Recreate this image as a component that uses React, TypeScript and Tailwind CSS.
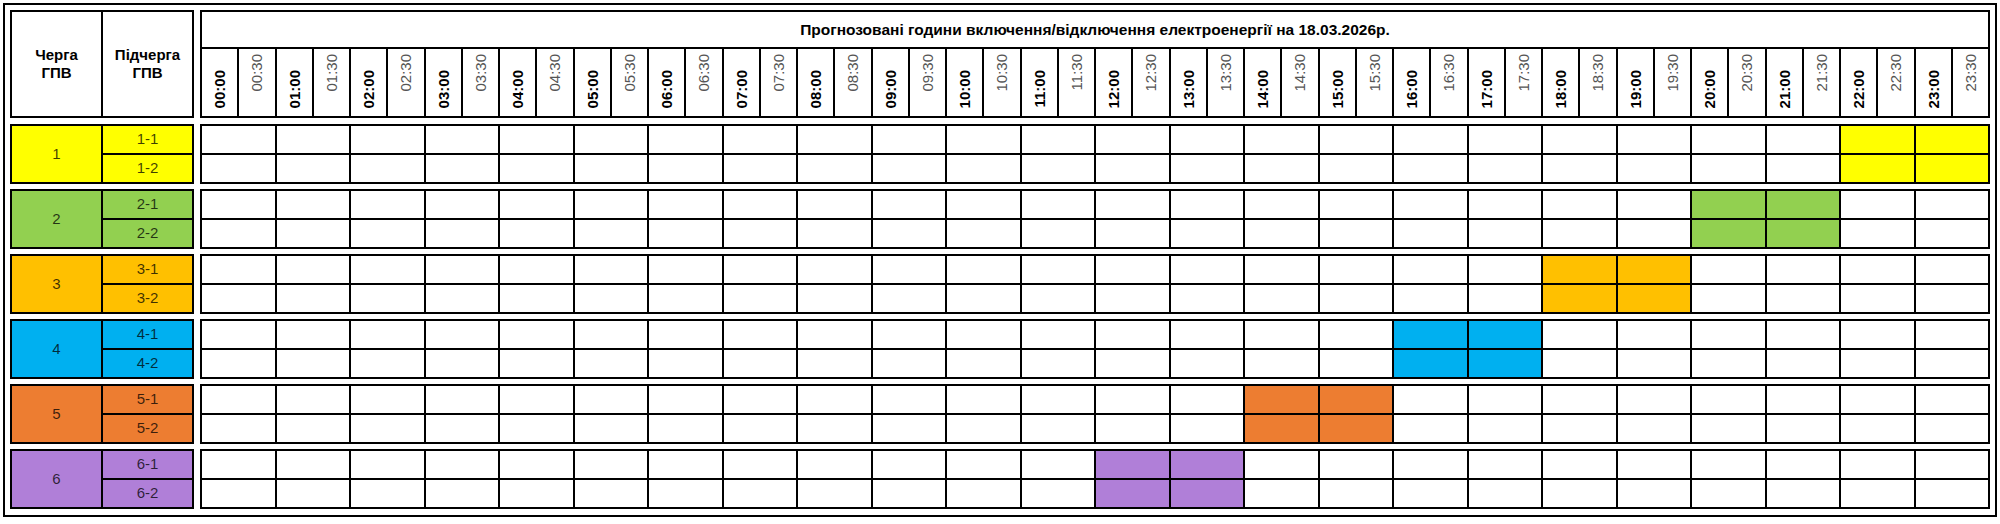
const groups = [
  { n: 1, color: "bg-[#ffff00]", from: 22 },
  { n: 2, color: "bg-[#92d050]", from: 20 },
  { n: 3, color: "bg-[#ffc000]", from: 18 },
  { n: 4, color: "bg-[#00b0f0]", from: 16 },
  { n: 5, color: "bg-[#ed7d31]", from: 14 },
  { n: 6, color: "bg-[#b07fd8]", from: 12 },
];

const hours = Array.from({ length: 24 }, (_, i) => i);
const pad = (n: number) => String(n).padStart(2, "0");

const TimeLabel = ({ h, half }: { h: number; half: boolean }) => (
  <div
    className={`bg-white flex flex-col items-center ${
      half ? "justify-start pt-[5px]" : "justify-end pb-[8px]"
    }`}
  >
    <span
      className={`[writing-mode:vertical-rl] rotate-180 text-[15px] leading-none ${
        half ? "font-normal text-[#555]" : "font-bold text-black"
      }`}
    >
      {pad(h)}:{half ? "30" : "00"}
    </span>
  </div>
);

const QueueRow = ({ n, color, from }: { n: number; color: string; from: number }) => (
  <div className="flex gap-[6px]">
    {/* queue / sub-queue labels */}
    <div className="w-[184px] shrink-0 grid grid-cols-2 grid-rows-[27px_27px] gap-[2px] bg-black border-2 border-black text-[15px] text-black/75">
      <div className={`${color} row-span-2 flex items-center justify-center`}>{n}</div>
      <div className={`${color} flex items-center justify-center`}>{n}-1</div>
      <div className={`${color} flex items-center justify-center`}>{n}-2</div>
    </div>

    {/* hourly grid */}
    <div className="flex-1 grid grid-cols-[repeat(48,minmax(0,1fr))] grid-rows-[27px_27px] gap-[2px] bg-black border-2 border-black">
      {[0, 1].map((sub) =>
        hours.map((h) => (
          <div
            key={`${sub}-${h}`}
            className={`col-span-2 ${h === from || h === from + 1 ? color : "bg-white"}`}
          />
        ))
      )}
    </div>
  </div>
);

export default function App() {
  return (
    <div className="bg-white p-[3px] w-[2000px] h-[524px] font-['Liberation_Sans',Arial,sans-serif]">
      <div className="border-2 border-black px-[5px] pt-[5px] pb-[6px] flex flex-col gap-[5px]">
        {/* header */}
        <div className="flex gap-[6px] mb-[1px]">
          <div className="w-[184px] shrink-0 h-[108px] grid grid-cols-2 gap-[2px] bg-black border-2 border-black text-[15px] font-bold leading-[18px] text-black">
            <div className="bg-white flex items-center justify-center text-center">
              Черга
              <br />
              ГПВ
            </div>
            <div className="bg-white flex items-center justify-center text-center">
              Підчерга
              <br />
              ГПВ
            </div>
          </div>

          <div className="flex-1 h-[108px] grid grid-cols-[repeat(48,minmax(0,1fr))] grid-rows-[35px_67px] gap-[2px] bg-black border-2 border-black">
            <div className="col-span-full bg-white flex items-center justify-center text-[15.5px] font-bold text-black">
              Прогнозовані години включення/відключення електроенергії на 18.03.2026р.
            </div>
            {hours.map((h) => [
              <TimeLabel key={`${h}a`} h={h} half={false} />,
              <TimeLabel key={`${h}b`} h={h} half={true} />,
            ])}
          </div>
        </div>

        {groups.map((g) => (
          <QueueRow key={g.n} {...g} />
        ))}
      </div>
    </div>
  );
}
